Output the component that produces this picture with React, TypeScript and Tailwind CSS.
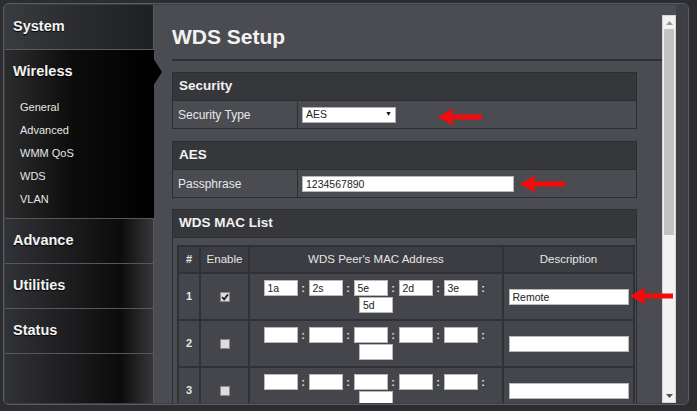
import React from "react";

function RedArrow({ left, top, width }: { left: number; top: number; width: number }) {
  return (
    <svg
      className="absolute"
      style={{ left, top }}
      width={width}
      height={20}
      viewBox={`0 0 ${width} 20`}
    >
      <polygon
        points={`0,10 16,1 13.5,7.5 ${width},7.5 ${width},12.5 13.5,12.5 16,19`}
        fill="#f40a0a"
      />
    </svg>
  );
}

function Box({ v, w = 34 }: { v?: string; w?: number }) {
  return (
    <div
      className="h-[16px] bg-white border border-[#b8b8b8] text-[10.5px] leading-[14px] text-[#222] pl-[3px] text-left"
      style={{ width: w }}
    >
      {v}
    </div>
  );
}

function MacCell({ vals }: { vals: string[] }) {
  return (
    <div className="flex flex-wrap justify-center gap-y-[1px] px-[4px]">
      {vals.map((v, i) => (
        <div key={i} className="flex items-center">
          <Box v={v} />
          {i < 5 && (
            <span className="w-[11px] text-center text-[11px] font-bold text-[#e0e0e0] leading-[16px]">:</span>
          )}
        </div>
      ))}
    </div>
  );
}

function CheckBox({ checked }: { checked?: boolean }) {
  return (
    <div className="mx-auto w-[10px] h-[10px] border border-[#8a8a8a] bg-[#dcdcdc] flex items-center justify-center">
      {checked && (
        <svg width="8" height="8" viewBox="0 0 8 8">
          <path d="M1 4.2 L3.2 6.4 L7 1.4" stroke="#222" strokeWidth="1.8" fill="none" />
        </svg>
      )}
    </div>
  );
}

function SideBlock({ label, h = "h-[45px]" }: { label: string; h?: string }) {
  return (
    <div
      className={`${h} shrink-0 flex items-center pl-[8px] border-b border-r border-[#56575b] bg-[linear-gradient(90deg,#313236_0%,#1c1c1e_45%,#0b0b0b_78%,#38383b_100%)]`}
    >
      <span className="text-[14.5px] font-bold text-[#f4f4f4] [text-shadow:0_1px_1px_#000]">{label}</span>
    </div>
  );
}

export default function App() {
  const rows = [
    { n: "1", checked: true, mac: ["1a", "2s", "5e", "2d", "3e", "5d"], desc: "Remote" },
    { n: "2", checked: false, mac: ["", "", "", "", "", ""], desc: "" },
    { n: "3", checked: false, mac: ["", "", "", "", "", ""], desc: "" },
  ];
  return (
    <div className="relative w-[697px] h-[411px] bg-[#2c2d31] pt-[3px] pl-[3px] pr-[8px] pb-[6px] font-['Liberation_Sans',Arial,sans-serif] overflow-hidden">
      <div className="h-full rounded-[6px] border border-[#5b5c61] p-[1px] bg-[#3c3d42] flex overflow-hidden">
        {/* Sidebar */}
        <div className="w-[149px] shrink-0 flex flex-col">
          <div className="h-[45px] shrink-0 flex items-center pl-[8px] border-b border-r border-[#5a5b5f] bg-[linear-gradient(90deg,#3a3b3f_0%,#2a2b2e_50%,#1f2022_100%)]">
            <span className="text-[14.5px] font-bold text-[#f4f4f4] [text-shadow:0_1px_1px_#000]">System</span>
          </div>
          <div className="h-[169px] shrink-0 flex flex-col border-b border-[#56575b] bg-[linear-gradient(90deg,#2c2c2c_0%,#0c0c0c_45%,#000_100%)]">
            <div className="h-[44px] flex items-center pl-[8px]">
              <span className="text-[14.5px] font-bold text-[#f4f4f4] [text-shadow:0_1px_1px_#000]">Wireless</span>
            </div>
            <div className="pt-[2px] flex flex-col">
              {["General", "Advanced", "WMM QoS", "WDS", "VLAN"].map((s) => (
                <div key={s} className="h-[23px] flex items-center pl-[15px] text-[11px] text-[#e6e6e6]">
                  {s}
                </div>
              ))}
            </div>
          </div>
          <SideBlock label="Advance" />
          <SideBlock label="Utilities" />
          <SideBlock label="Status" />
          <div className="flex-1 border-r border-[#56575b] bg-[linear-gradient(90deg,#313236_0%,#1c1c1e_45%,#0b0b0b_78%,#38383b_100%)]" />
        </div>

        {/* Content */}
        <div className="flex-1 flex bg-[#4b4c52] overflow-hidden">
          <div className="flex-1 pl-[18px] pt-[20px] overflow-hidden">
            <div className="text-[21px] leading-[24px] font-bold text-[#f2f2f2]">WDS Setup</div>
            <div className="mt-[10px] h-[2px] bg-[#2e2f33]" />

            {/* Security */}
            <div className="mt-[11px] w-[465px] border border-[#2d2e32]">
              <div className="h-[27px] bg-[#36373b] flex items-center pl-[6px] text-[13.5px] font-bold text-[#f2f2f2]">
                Security
              </div>
              <div className="h-[28px] flex border-t border-[#2d2e32]">
                <div className="w-[125px] border-r border-[#2d2e32] flex items-center pl-[5px] text-[12px] text-[#e8e8e8]">
                  Security Type
                </div>
                <div className="flex items-center pl-[4px]">
                  <div className="w-[94px] h-[16px] bg-white border border-[#b0b0b0] flex items-center justify-between px-[3px] text-[10.5px] text-[#222]">
                    <span>AES</span>
                    <span className="text-[7px] text-[#111]">▼</span>
                  </div>
                </div>
              </div>
            </div>

            {/* AES */}
            <div className="mt-[12px] w-[465px] border border-[#2d2e32]">
              <div className="h-[27px] bg-[#36373b] flex items-center pl-[6px] text-[13.5px] font-bold text-[#f2f2f2]">
                AES
              </div>
              <div className="h-[28px] flex border-t border-[#2d2e32]">
                <div className="w-[125px] border-r border-[#2d2e32] flex items-center pl-[5px] text-[12px] text-[#e8e8e8]">
                  Passphrase
                </div>
                <div className="flex items-center pl-[4px]">
                  <Box v="1234567890" w={212} />
                </div>
              </div>
            </div>

            {/* WDS MAC List */}
            <div className="mt-[11px] w-[465px] border border-[#2d2e32]">
              <div className="h-[27px] bg-[#36373b] flex items-center pl-[6px] text-[13.5px] font-bold text-[#f2f2f2]">
                WDS MAC List
              </div>
              <div className="border-t border-[#2d2e32] pt-[7px] pl-[4px] pb-[6px]">
                <table className="w-[456px] border-collapse table-fixed text-[#e6e6e6]">
                  <colgroup>
                    <col className="w-[22px]" />
                    <col className="w-[49px]" />
                    <col className="w-[254px]" />
                    <col className="w-[131px]" />
                  </colgroup>
                  <thead>
                    <tr className="h-[27px] bg-[#3c3d42]">
                      <th className="border-2 border-[#303135] text-[11px] font-bold">#</th>
                      <th className="border-2 border-[#303135] text-[11.5px] font-normal">Enable</th>
                      <th className="border-2 border-[#303135] text-[11.5px] font-normal">WDS Peer's MAC Address</th>
                      <th className="border-2 border-[#303135] text-[11.5px] font-normal">Description</th>
                    </tr>
                  </thead>
                  <tbody>
                    {rows.map((r) => (
                      <tr key={r.n} className="h-[47px] bg-[#45464b]">
                        <td className="border-2 border-[#303135] text-center text-[11px] font-bold">{r.n}</td>
                        <td className="border-2 border-[#303135]">
                          <CheckBox checked={r.checked} />
                        </td>
                        <td className="border-2 border-[#303135] py-[6px]">
                          <MacCell vals={r.mac} />
                        </td>
                        <td className="border-2 border-[#303135]">
                          <div className="flex justify-center">
                            <Box v={r.desc} w={120} />
                          </div>
                        </td>
                      </tr>
                    ))}
                  </tbody>
                </table>
              </div>
            </div>
          </div>

          {/* Scrollbar */}
          <div className="w-[14px] shrink-0 mt-[10px] bg-[#f2f2f2] border border-[#d6d6d6] flex flex-col">
            <div className="h-[13px] flex items-center justify-center">
              <svg width="7" height="4" viewBox="0 0 7 4">
                <polygon points="0,4 3.5,0 7,4" fill="#9a9a9a" />
              </svg>
            </div>
            <div className="mx-auto w-[10px] h-[206px] bg-[#c3c3c3]" />
            <div className="flex-1" />
            <div className="h-[13px] flex items-center justify-center">
              <svg width="7" height="4" viewBox="0 0 7 4">
                <polygon points="0,0 7,0 3.5,4" fill="#505050" />
              </svg>
            </div>
          </div>
          <div className="w-[11px] shrink-0 bg-[#3f4045]" />
        </div>
      </div>

      {/* sidebar pointer */}
      <svg className="absolute left-[153px] top-[58px]" width="10" height="28" viewBox="0 0 10 28">
        <polygon points="0,0 9,14 0,28" fill="#000" />
      </svg>

      <RedArrow left={438} top={107} width={44} />
      <RedArrow left={520} top={174} width={45} />
      <RedArrow left={630} top={286} width={43} />
    </div>
  );
}
